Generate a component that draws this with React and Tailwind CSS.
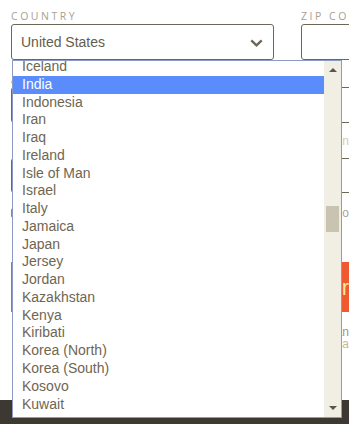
import React from "react";

const countries = [
  "Iceland",
  "India",
  "Indonesia",
  "Iran",
  "Iraq",
  "Ireland",
  "Isle of Man",
  "Israel",
  "Italy",
  "Jamaica",
  "Japan",
  "Jersey",
  "Jordan",
  "Kazakhstan",
  "Kenya",
  "Kiribati",
  "Korea (North)",
  "Korea (South)",
  "Kosovo",
  "Kuwait",
];

export default function App() {
  return (
    <div className="relative w-[349px] h-[424px] overflow-hidden bg-white font-['Liberation_Sans',Arial,sans-serif]">
      <div className="flex flex-col h-full">
        <div className="flex-1 min-h-0 pl-[11px] pt-[9px] overflow-hidden">
          {/* top row */}
          <div className="flex gap-[27px]">
            <div className="w-[263px] shrink-0">
              <div className="h-[15px] text-[10.5px] leading-[15px] tracking-[0.24em] text-[#a8a191] font-['Open_Sans',sans-serif]">
                COUNTRY
              </div>
              <div className="h-[36px] border border-[#6d6758] rounded-[3px] flex items-center justify-between pl-[9px] pr-[10px]">
                <span className="text-[14px] text-[#655d4b]">United States</span>
                <svg width="13" height="8" viewBox="0 0 13 8" className="mt-[2px]">
                  <path d="M1.3 1.3 L6.5 6.3 L11.7 1.3" fill="none" stroke="#6d6758" strokeWidth="2.4" />
                </svg>
              </div>
            </div>
            <div className="flex-1 min-w-0">
              <div className="h-[15px] text-[10.5px] leading-[15px] tracking-[0.24em] text-[#a8a191] font-['Open_Sans',sans-serif] whitespace-nowrap">
                ZIP CODE
              </div>
              <div className="h-[36px] w-[120px] border border-[#6d6758] rounded-[3px]" />
            </div>
          </div>

          {/* rows hidden behind dropdown */}
          <div className="mt-[12px] h-[15px] text-[10.5px] leading-[15px] tracking-[0.24em] text-[#a8a191]">
            ADDRESS
          </div>
          <div className="h-[36px] w-[360px] border border-[#6d6758] rounded-[3px]" />
          <div className="h-[35px] w-[338px] flex items-center justify-end text-[12px] text-[#d6cca8] whitespace-nowrap overflow-hidden">
            Apartment, suite, unit, etc. (optional) in
          </div>
          <div className="h-[35px] w-[360px] border border-[#6d6758] rounded-[3px]" />
          <div className="mt-[13px] flex items-center gap-[6px] h-[14px]">
            <div className="w-[10px] h-[10px] border border-[#8d877a] rounded-[2px]" />
            <div className="w-[326px] text-right text-[12px] text-[#a9a49a] leading-[14px] whitespace-nowrap overflow-hidden">
              Save this information for next time o
            </div>
          </div>
          <div className="mt-[42px] h-[50px] w-[338px] bg-[#f05a30] flex items-center justify-end pr-[0px]">
            <span className="text-[22px] text-[#fde9a0]">Order</span>
          </div>
          <div className="mt-[14px] w-[338px] text-right text-[12px] leading-[12px] text-[#9b9588] whitespace-nowrap overflow-hidden">
            By placing your order you agree to our terms an
          </div>
          <div className="w-[338px] text-right text-[12px] leading-[12px] text-[#c9b98f] whitespace-nowrap overflow-hidden">
            and conditions of sa
          </div>
        </div>
        <div className="h-[24px] bg-[#3d3832] shrink-0" />
      </div>

      {/* open dropdown list */}
      <div className="absolute left-[12px] top-[60px] w-[330px] h-[358px] border border-[#8c9ac6] bg-white flex overflow-hidden">
        <div className="flex-1 overflow-hidden">
          <div className="mt-[-3px]">
            {countries.map((c) => (
              <div
                key={c}
                className={
                  "h-[17.78px] leading-[17.78px] pl-[9px] text-[14px] whitespace-nowrap " +
                  (c === "India" ? "bg-[#5a8cfc] text-white" : "text-[#6f6652]")
                }
              >
                {c}
              </div>
            ))}
          </div>
        </div>
        <div className="w-[17px] shrink-0 bg-[#f1eee4] flex flex-col items-center">
          <div className="h-[17px] flex items-center justify-center">
            <svg width="8" height="5" viewBox="0 0 8 5">
              <path d="M0 5 L4 1 L8 5 Z" fill="#5a5548" />
            </svg>
          </div>
          <div className="h-[128px]" />
          <div className="w-[13px] h-[26px] bg-[#c9c4b1]" />
          <div className="flex-1" />
          <div className="h-[17px] flex items-center justify-center">
            <svg width="8" height="5" viewBox="0 0 8 5">
              <path d="M0 0 L8 0 L4 4 Z" fill="#5a5548" />
            </svg>
          </div>
        </div>
      </div>
    </div>
  );
}
